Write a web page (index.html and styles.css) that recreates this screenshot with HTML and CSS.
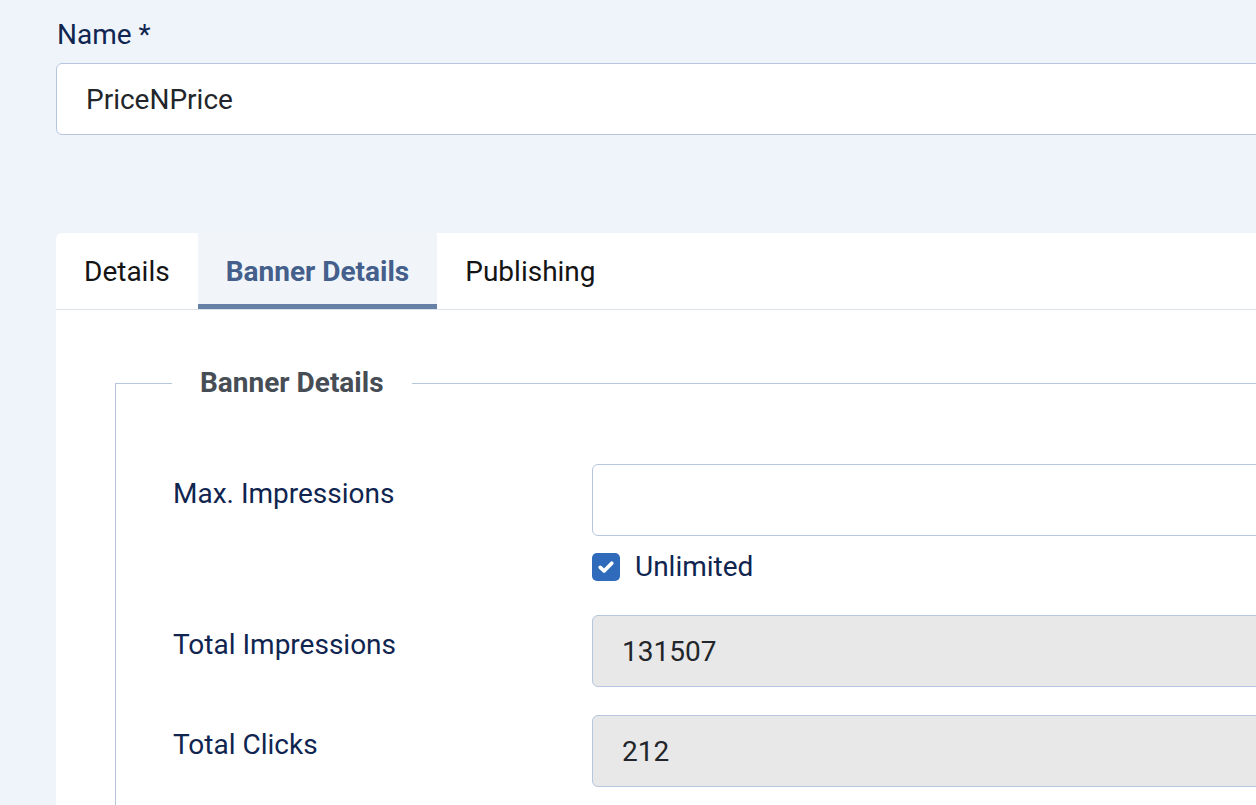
FILE: index.html
```html
<!DOCTYPE html>
<html lang="en">
<head>
<meta charset="utf-8">
<title>Banner</title>
<link rel="stylesheet" href="styles.css">
</head>
<body>
<div class="page">
  <div class="title-group">
    <label class="title-label" for="name">Name <span class="req">*</span></label>
    <input id="name" class="form-control" type="text" value="PriceNPrice">
  </div>

  <div class="card">
    <div class="tabs">
      <button class="tab">Details</button>
      <button class="tab active">Banner Details</button>
      <button class="tab">Publishing</button>
    </div>
    <div class="panel">
      <fieldset class="options">
        <legend>Banner Details</legend>
        <div class="row">
          <label class="col-label">Max. Impressions</label>
          <div class="col-control">
            <input class="form-control" type="text" value="">
            <label class="check">
              <span class="box"><svg viewBox="0 0 16 16" width="16" height="16"><path d="M3.4 8.3 L6.5 11.2 L12.6 5" fill="none" stroke="#fff" stroke-width="3" stroke-linecap="round" stroke-linejoin="round"/></svg></span>
              <span class="check-text">Unlimited</span>
            </label>
          </div>
        </div>
        <div class="row">
          <label class="col-label">Total Impressions</label>
          <div class="col-control">
            <input class="form-control readonly" type="text" value="131507" readonly>
          </div>
        </div>
        <div class="row">
          <label class="col-label">Total Clicks</label>
          <div class="col-control">
            <input class="form-control readonly" type="text" value="212" readonly>
          </div>
        </div>
      </fieldset>
    </div>
  </div>
</div>
</body>
</html>
```
FILE: styles.css
```css
html, body {
  margin: 0;
  padding: 0;
  overflow: hidden;
}
body {
  background: #eff4fb;
  font-family: Roboto, "Liberation Sans", Arial, sans-serif;
  font-size: 28px;
  line-height: 42px;
  color: #22262a;
}
.page {
  padding: 14px 0 0 56px;
  width: 1500px;
}
.title-group {
  display: flex;
  flex-direction: column;
}
.title-label {
  color: #0f2550;
  margin-bottom: 7px;
  padding-left: 1px;
}
.form-control {
  box-sizing: border-box;
  display: block;
  width: 100%;
  height: 72px;
  border: 1px solid #b6c6df;
  border-radius: 6px;
  background: #fff;
  padding: 0 29px;
  font-family: inherit;
  font-size: 28px;
  color: #22262a;
  outline: none;
}
.form-control.readonly {
  background: #e8e8e8;
}
.card {
  margin-top: 98px;
  background: #fff;
  border-radius: 6px 0 0 0;
}
.tabs {
  display: flex;
  border-bottom: 1px solid #dde2e8;
}
.tab {
  font-family: inherit;
  font-size: 28px;
  line-height: 42px;
  background: transparent;
  border: 0;
  border-bottom: 5px solid transparent;
  padding: 18px 28px 11px 28px;
  color: #141414;
  cursor: pointer;
}
.tab:first-child {
  border-top-left-radius: 6px;
}
.tab.active {
  background: #f1f5f9;
  border-bottom-color: #6680a6;
  color: #445f8b;
  font-weight: 700;
}
.panel {
  padding: 52px 0 0 59px;
}
.options {
  margin: 0;
  border: 1px solid #b6c6df;
  border-right: 0;
  padding: 60px 0 40px 56px;
}
.options legend {
  font-weight: 700;
  color: #474d55;
  padding: 0 28px;
  line-height: 42px;
}
.row {
  display: flex;
  margin-bottom: 28px;
}
.col-label {
  width: 420px;
  flex: none;
  color: #0f2550;
  padding-top: 9px;
  padding-left: 1px;
  box-sizing: border-box;
}
.col-control {
  flex: 1;
  display: flex;
  flex-direction: column;
}
.check {
  display: flex;
  align-items: center;
  margin-top: 10px;
  height: 41px;
  color: #0f2550;
}
.box {
  width: 28px;
  height: 28px;
  border-radius: 5px;
  background: #2f6abb;
  display: flex;
  align-items: center;
  justify-content: center;
  margin-right: 15px;
}
.box svg {
  width: 20px;
  height: 20px;
}
```
